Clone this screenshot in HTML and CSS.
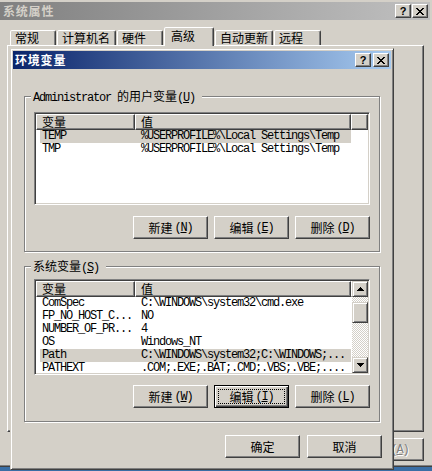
FILE: index.html
```html
<!DOCTYPE html>
<html lang="zh-CN">
<head>
<meta charset="utf-8">
<title>系统属性</title>
<link rel="stylesheet" href="styles.css">
</head>
<body>
<div class="win outer">
  <div class="titlebar inactive">
    <span class="title">系统属性</span>
    <div class="tbtns gap1">
      <div class="tbtn raised"><span class="q">?</span></div>
      <div class="tbtn raised"><svg class="xicon" width="8" height="7" viewBox="0 0 8 7"><path d="M0 0h2v1H0zM6 0h2v1H6zM1 1h2v1H1zM5 1h2v1H5zM2 2h4v1H2zM3 3h2v1H3zM2 4h4v1H2zM1 5h2v1H1zM5 5h2v1H5zM0 6h2v1H0zM6 6h2v1H6z"/></svg></div>
    </div>
  </div>
  <div class="outer-body">
    <div class="tabs">
      <div class="tab t46">常规</div>
      <div class="tab t59">计算机名</div>
      <div class="tab t46">硬件</div>
      <div class="tab t50 sel">高级</div>
      <div class="tab t58">自动更新</div>
      <div class="tab t47">远程</div>
    </div>
    <div class="panel"></div>
    <div class="outer-btns">
      <div class="btn raised">确定</div>
      <div class="btn raised">取消</div>
      <div class="btn raised disabled">应用<span class="m key">(<u>A</u>)</span></div>
    </div>
  </div>
</div>

<div class="win dialog">
  <div class="titlebar active dlg-title">
    <span class="title">环境变量</span>
    <div class="tbtns">
      <div class="tbtn raised"><span class="q">?</span></div>
      <div class="tbtn raised"><svg class="xicon" width="8" height="7" viewBox="0 0 8 7"><path d="M0 0h2v1H0zM6 0h2v1H6zM1 1h2v1H1zM5 1h2v1H5zM2 2h4v1H2zM3 3h2v1H3zM2 4h4v1H2zM1 5h2v1H1zM5 5h2v1H5zM0 6h2v1H0zM6 6h2v1H6z"/></svg></div>
    </div>
  </div>
  <div class="dlg-body">
    <div class="group g1">
      <div class="legend"><span class="m">Administrator </span>的用户变量<span class="m">(<u>U</u>)</span></div>
      <div class="list l1">
        <div class="lv-main">
          <div class="lv-head">
            <div class="hc c1">变量</div>
            <div class="hc c2">值</div>
            <div class="hc fill"></div>
          </div>
          <div class="rows">
            <div class="row sel"><span class="cell c1 m">TEMP</span><span class="cell c2 m">%USERPROFILE%\Local Settings\Temp</span></div>
            <div class="row"><span class="cell c1 m">TMP</span><span class="cell c2 m">%USERPROFILE%\Local Settings\Temp</span></div>
          </div>
        </div>
      </div>
      <div class="btnrow">
        <div class="btn raised">新建<span class="m key">(<u>N</u>)</span></div>
        <div class="btn raised">编辑<span class="m key">(<u>E</u>)</span></div>
        <div class="btn raised">删除<span class="m key">(<u>D</u>)</span></div>
      </div>
    </div>

    <div class="group g2">
      <div class="legend">系统变量<span class="m">(<u>S</u>)</span></div>
      <div class="list l2">
        <div class="lv-main">
          <div class="lv-head">
            <div class="hc c1">变量</div>
            <div class="hc c2">值</div>
            <div class="hc fill"></div>
          </div>
          <div class="rows">
            <div class="row"><span class="cell c1 m">ComSpec</span><span class="cell c2 m">C:\WINDOWS\system32\cmd.exe</span></div>
            <div class="row"><span class="cell c1 m">FP_NO_HOST_C...</span><span class="cell c2 m">NO</span></div>
            <div class="row"><span class="cell c1 m">NUMBER_OF_PR...</span><span class="cell c2 m">4</span></div>
            <div class="row"><span class="cell c1 m">OS</span><span class="cell c2 m">Windows_NT</span></div>
            <div class="row sel"><span class="cell c1 m">Path</span><span class="cell c2 m">C:\WINDOWS\system32;C:\WINDOWS;...</span></div>
            <div class="row"><span class="cell c1 m">PATHEXT</span><span class="cell c2 m">.COM;.EXE;.BAT;.CMD;.VBS;.VBE;....</span></div>
          </div>
        </div>
        <div class="sb">
          <div class="sb-btn"><svg width="7" height="4" viewBox="0 0 7 4"><path d="M3 0h1v1H3zM2 1h3v1H2zM1 2h5v1H1zM0 3h7v1H0z"/></svg></div>
          <div class="sb-track"><div class="sb-thumb"></div></div>
          <div class="sb-btn"><svg width="7" height="4" viewBox="0 0 7 4"><path d="M0 0h7v1H0zM1 1h5v1H1zM2 2h3v1H2zM3 3h1v1H3z"/></svg></div>
        </div>
      </div>
      <div class="btnrow">
        <div class="btn raised">新建<span class="m key">(<u>W</u>)</span></div>
        <div class="btn default">编辑<span class="m key">(<u>I</u>)</span></div>
        <div class="btn raised">删除<span class="m key">(<u>L</u>)</span></div>
      </div>
    </div>

    <div class="okrow">
      <div class="btn raised">确定</div>
      <div class="btn raised">取消</div>
    </div>
  </div>
</div>
</body>
</html>
```
FILE: styles.css
```css
* { box-sizing: border-box; }
html, body { margin: 0; padding: 0; }
body {
  width: 432px;
  height: 471px;
  overflow: hidden;
  position: relative;
  display: flow-root;
  background: #3a6ea5;
  font-family: "Noto Sans CJK SC", "Liberation Sans", sans-serif;
  font-size: 12px;
  color: #000;
}
.m {
  font-family: "Liberation Mono", "DejaVu Sans Mono", monospace;
  font-size: 12px;
  letter-spacing: -1.2px;
}
.key { margin-left: 2px; }
u { text-decoration: underline; text-underline-offset: 1px; }

/* window frames */
.win {
  background: #d4d0c8;
  border: 1px solid;
  border-color: #d4d0c8 #404040 #404040 #d4d0c8;
  box-shadow: inset 1px 1px #fff, inset -1px -1px #808080;
  display: flex;
  flex-direction: column;
}
.outer {
  margin: -2px 0 0 -4px;
  width: 438px;
  height: 469px;
  padding: 3px;
}
.dialog {
  position: absolute;
  left: 10px;
  top: 48px;
  width: 384px;
  height: 422px;
  padding: 2px;
}

/* title bars */
.titlebar {
  height: 18px;
  flex: none;
  display: flex;
  align-items: center;
  padding: 0 2px 0 3px;
}
.dlg-title { padding-left: 2px; }
.inactive { background: linear-gradient(to right, #808080, #c0c0c0); color: #d4d0c8; }
.active { background: linear-gradient(to right, #0a246a, #a6caf0); color: #fff; }
.title {
  flex: 1;
  font-weight: bold;
  font-size: 12px;
  line-height: 18px;
  letter-spacing: 0.8px;
  white-space: nowrap;
}
.tbtns { display: flex; gap: 2px; }
.tbtns.gap1 { gap: 1px; }
.tbtn {
  width: 16px;
  height: 14px;
  display: flex;
  align-items: center;
  justify-content: center;
  color: #000;
}
.q {
  font-family: "Liberation Sans", sans-serif;
  font-weight: bold;
  font-size: 11px;
  line-height: 11px;
}
.xicon { display: block; fill: #000; shape-rendering: crispEdges; }

.raised {
  background: #d4d0c8;
  border: 1px solid;
  border-color: #fff #404040 #404040 #fff;
  box-shadow: inset -1px -1px #808080;
}

/* outer window body */
.outer-body {
  flex: 1;
  display: flex;
  flex-direction: column;
  padding: 0 6px 0 7px;
}
.tabs {
  flex: none;
  height: 18px;
  margin-top: 7px;
  padding-left: 3px;
  display: flex;
  align-items: flex-end;
  gap: 1px;
  position: relative;
  z-index: 1;
}
.tab {
  height: 15px;
  border: 1px solid;
  border-bottom: none;
  border-color: #fff #404040 transparent #fff;
  border-radius: 2px 2px 0 0;
  box-shadow: inset -1px 0 #808080;
  background: #d4d0c8;
  padding-left: 4px;
  line-height: 14px;
  white-space: nowrap;
}
.tab.sel {
  height: 19px;
  margin-bottom: -1px;
  padding-left: 6px;
  line-height: 16px;
}
.t46 { width: 46px; }
.t47 { width: 47px; }
.t50 { width: 50px; }
.t58 { width: 58px; }
.t59 { width: 59px; }

.panel {
  flex: none;
  height: 387px;
  border: 1px solid;
  border-color: #fff #404040 #404040 #fff;
  box-shadow: inset -1px -1px #808080;
}
.outer-btns {
  flex: none;
  margin-top: 6px;
  display: flex;
  justify-content: flex-end;
  gap: 6px;
}

/* buttons */
.btn {
  flex: none;
  width: 75px;
  height: 23px;
  display: flex;
  align-items: center;
  justify-content: center;
  line-height: 14px;
  white-space: nowrap;
  position: relative;
}
.btn.disabled { color: #808080; text-shadow: 1px 1px 0 #fff; }
.btn.default {
  background: #d4d0c8;
  border: 1px solid #000;
  box-shadow: inset 1px 1px #fff, inset -1px -1px #404040, inset -2px -2px #808080;
}
.btn.default::after {
  content: "";
  position: absolute;
  inset: 3px 3px 3px 3px;
  border: 1px dotted #000;
}

/* dialog body */
.dlg-body {
  flex: 1;
  display: flex;
  flex-direction: column;
  padding-left: 11px;
}
.group {
  flex: none;
  width: 356px;
  height: 156px;
  border: 1px solid #808080;
  box-shadow: inset 1px 1px #fff, 1px 1px #fff;
  display: flex;
  flex-direction: column;
}
.g1 { margin-top: 27px; }
.g2 { margin-top: 14px; }
.legend {
  align-self: flex-start;
  margin: -8px 0 0 6px;
  padding: 0 7px 0 2px;
  height: 14px;
  line-height: 14px;
  background: #d4d0c8;
  white-space: nowrap;
}

/* list views */
.list {
  flex: none;
  width: 336px;
  margin-left: 9px;
  border: 1px solid;
  border-color: #808080 #fff #fff #808080;
  box-shadow: inset 1px 1px #404040, inset -1px -1px #d4d0c8;
  padding: 1px;
  background: #fff;
  display: flex;
}
.l1 { height: 93px; margin-top: 9px; }
.l2 { height: 96px; margin-top: 6px; }
.lv-main {
  flex: 1;
  min-width: 0;
  display: flex;
  flex-direction: column;
  overflow: hidden;
}
.lv-head { flex: none; display: flex; height: 16px; }
.hc {
  flex: none;
  border: 1px solid;
  border-color: #fff #404040 #404040 #fff;
  box-shadow: inset -1px -1px #808080;
  background: #d4d0c8;
  padding-left: 5px;
  line-height: 13px;
  white-space: nowrap;
}
.hc.c1 { width: 99px; }
.hc.c2 { width: 216px; }
.hc.fill { flex: 1; }
.rows { flex: 1; }
.row {
  display: flex;
  height: 13px;
  line-height: 13px;
  margin-left: 4px;
  width: 311px;
  white-space: nowrap;
}
.row.sel { background: #d4d0c8; }
.cell { overflow: hidden; }
.cell.c1 { width: 95px; padding-left: 2px; flex: none; }
.cell.c2 { width: 216px; padding-left: 6px; flex: none; }

/* scrollbar */
.sb { flex: none; width: 16px; display: flex; flex-direction: column; }
.sb-btn, .sb-thumb {
  background: #d4d0c8;
  border: 1px solid;
  border-color: #d4d0c8 #404040 #404040 #d4d0c8;
  box-shadow: inset 1px 1px #fff, inset -1px -1px #808080;
}
.sb-btn {
  flex: none;
  height: 16px;
  display: flex;
  align-items: center;
  justify-content: center;
}
.sb-btn svg { display: block; fill: #000; shape-rendering: crispEdges; }
.sb-track {
  flex: 1;
  background-color: #fff;
  background-image: repeating-conic-gradient(#d4d0c8 0 25%, #fff 0 50%);
  background-size: 2px 2px;
  display: flex;
  flex-direction: column;
}
.sb-thumb { flex: none; height: 21px; margin-top: 5px; }

.btnrow {
  flex: none;
  width: 336px;
  margin-left: 9px;
  display: flex;
  justify-content: flex-end;
  gap: 6px;
}
.g1 .btnrow { margin-top: 11px; }
.g2 .btnrow { margin-top: 10px; }

.okrow {
  flex: none;
  margin-top: 13px;
  padding-right: 9px;
  display: flex;
  justify-content: flex-end;
  gap: 7px;
}
```
